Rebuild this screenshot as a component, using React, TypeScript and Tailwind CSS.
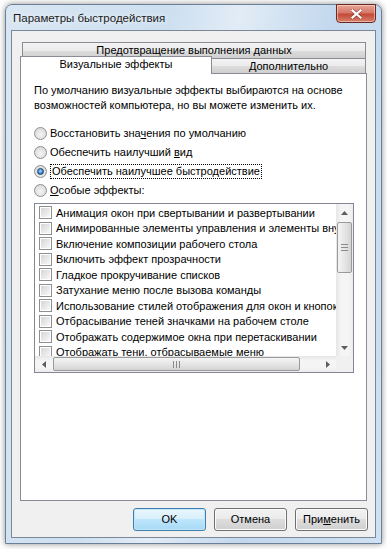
import React from "react"

const effects = [
  "Анимация окон при свертывании и развертывании",
  "Анимированные элементы управления и элементы внутри окна",
  "Включение композиции рабочего стола",
  "Включить эффект прозрачности",
  "Гладкое прокручивание списков",
  "Затухание меню после вызова команды",
  "Использование стилей отображения для окон и кнопок",
  "Отбрасывание теней значками на рабочем столе",
  "Отображать содержимое окна при перетаскивании",
  "Отображать тени, отбрасываемые меню",
]

const Radio = ({ checked }: { checked?: boolean }) => (
  <span className="flex items-center justify-center w-[13px] h-[13px] rounded-full border border-[#8e8f8f] bg-[radial-gradient(circle_at_50%_60%,#f4f4f4,#d3d3d3)] shrink-0">
    {checked && (
      <span className="w-[7px] h-[7px] rounded-full border border-[#1c3f6e] bg-[radial-gradient(circle_at_45%_40%,#a9daff,#2a75c4_70%)]" />
    )}
  </span>
)

const Checkbox = () => (
  <span className="w-[13px] h-[13px] border border-[#8e8f8f] bg-white p-px shrink-0">
    <span className="block w-full h-full bg-[linear-gradient(135deg,#d6d6d6,#f8f8f8)]" />
  </span>
)

const Arrow = ({ dir }: { dir: "up" | "down" | "left" | "right" }) => {
  const pts = {
    up: "0,4 3.5,0 7,4",
    down: "0,0 3.5,4 7,0",
    left: "4,0 0,3.5 4,7",
    right: "0,0 4,3.5 0,7",
  }[dir]
  const vertical = dir === "up" || dir === "down"
  return (
    <svg width={vertical ? 7 : 4} height={vertical ? 4 : 7} viewBox={vertical ? "0 0 7 4" : "0 0 4 7"}>
      <polygon points={pts} fill="#5e5e5e" />
    </svg>
  )
}

const Button = ({ children, primary }: { children: React.ReactNode; primary?: boolean }) => (
  <div
    className={
      "w-[73px] h-[23px] rounded-[3px] border flex items-center justify-center text-[11px] text-black " +
      (primary
        ? "border-[#3c7fb1] bg-[linear-gradient(#eaf6fd_0%,#d9f0fc_45%,#bee6fd_50%,#a7d9f5_100%)] shadow-[inset_0_0_0_1px_#c4e5f6]"
        : "border-[#707070] bg-[linear-gradient(#f2f2f2_0%,#ebebeb_45%,#dddddd_50%,#cfcfcf_100%)] shadow-[inset_0_0_0_1px_#fbfbfb]")
    }
  >
    {children}
  </div>
)

export default function App() {
  return (
    <div className="w-[387px] h-[549px] bg-white overflow-hidden font-['Liberation_Sans',Arial,sans-serif] text-black">
      <div className="ml-[5px] mt-[4px] w-[377px] h-[540px] rounded-t-[7px] border border-[#6b7f97] bg-[linear-gradient(100deg,#d9e6f3_0%,#cddff0_35%,#e2ecf6_50%,#c3d8ee_70%,#cfe1f2_100%)] shadow-[0_0_6px_rgba(0,0,0,0.45)] flex flex-col">
        <div className="h-[25px] flex justify-between shrink-0">
          <span className="pl-[7px] pt-[5px] text-[11.5px] text-[#1b1b1b] [text-shadow:0_0_6px_#fff]">
            Параметры быстродействия
          </span>
          <div className="mr-[5px] -mt-px w-[40px] h-[19px] rounded-b-[4px] border border-[#6b2a21] bg-[linear-gradient(#e8a597_0%,#d6786a_45%,#c44a36_55%,#d6806c_100%)] shadow-[inset_0_0_0_1px_rgba(255,220,210,0.55)] flex items-center justify-center">
            <svg width="11" height="10" viewBox="0 0 11 10">
              <path d="M1.5 1.5 L9.5 8.5 M9.5 1.5 L1.5 8.5" stroke="#4a1a12" strokeWidth="3.4" strokeLinecap="square" opacity="0.5" />
              <path d="M1.5 1.5 L9.5 8.5 M9.5 1.5 L1.5 8.5" stroke="#ffffff" strokeWidth="2.2" strokeLinecap="square" />
            </svg>
          </div>
        </div>

        <div className="mx-[5px] h-[508px] border border-[#7a8796] bg-[#f0f0f0] pt-[11px] pl-[8px] pr-[7px]">
          {/* tabs */}
          <div className="ml-[2px] w-[344px] h-[16px] border border-b-0 border-[#898c95] bg-[linear-gradient(#f3f3f3_0%,#ebebeb_50%,#dddddd_51%,#cfcfcf_100%)] flex items-center justify-center text-[11px]">
            Предотвращение выполнения данных
          </div>
          <div className="-mt-[2px] -mb-px flex items-end relative z-10">
            <div className="w-[192px] h-[18px] border border-b-0 border-[#898c95] bg-white flex items-center justify-center text-[11px] pb-[2px]">
              Визуальные эффекты
            </div>
            <div className="w-[154px] h-[15px] mb-px border border-l-0 border-b-0 border-[#898c95] bg-[linear-gradient(#f3f3f3_0%,#ebebeb_50%,#dddddd_51%,#cfcfcf_100%)] flex items-center justify-center text-[11px]">
              Дополнительно
            </div>
          </div>

          {/* panel */}
          <div className="w-[347px] h-[428px] border border-[#898c95] bg-white pt-[9px] px-[13px]">
            <p className="text-[11px] leading-[15px]">
              По умолчанию визуальные эффекты выбираются на основе возможностей компьютера, но вы можете изменить их.
            </p>
            <div className="mt-[11px] flex flex-col text-[11px]">
              <label className="h-[19px] flex items-center gap-[3px]">
                <Radio />
                <span>
                  Восстановить зна<span className="underline">ч</span>ения по умолчанию
                </span>
              </label>
              <label className="h-[19px] flex items-center gap-[3px]">
                <Radio />
                <span>
                  Обеспечить наилучший <span className="underline">в</span>ид
                </span>
              </label>
              <label className="h-[19px] flex items-center gap-[3px]">
                <Radio checked />
                <span className="border border-dotted border-black leading-[13px] px-px">
                  Обеспечить наилучшее быстродействие
                </span>
              </label>
              <label className="h-[19px] flex items-center gap-[3px]">
                <Radio />
                <span>
                  <span className="underline">О</span>собые эффекты:
                </span>
              </label>
            </div>

            {/* list box */}
            <div className="mt-[3px] w-[320px] h-[170px] border border-[#828790] grid grid-cols-[1fr_17px] grid-rows-[1fr_16px] overflow-hidden">
              <div className="overflow-hidden pt-[1px]">
                {effects.map((e) => (
                  <div key={e} className="h-[15.5px] flex items-center gap-[4px] pl-[4px] text-[11px] whitespace-nowrap">
                    <Checkbox />
                    <span>{e}</span>
                  </div>
                ))}
              </div>
              <div className="bg-[linear-gradient(90deg,#e6e6e6,#f5f5f5_30%,#f5f5f5_70%,#ececec)] flex flex-col items-center">
                <div className="h-[17px] w-full flex items-center justify-center">
                  <Arrow dir="up" />
                </div>
                <div className="w-[15px] h-[51px] mt-px rounded-[2px] border border-[#9a9a9a] bg-[linear-gradient(90deg,#f4f4f4,#e6e6e6_50%,#d4d4d4)] flex flex-col items-center justify-center gap-[2px]">
                  <span className="w-[7px] h-px bg-[#8a8a8a]" />
                  <span className="w-[7px] h-px bg-[#8a8a8a]" />
                  <span className="w-[7px] h-px bg-[#8a8a8a]" />
                </div>
                <div className="flex-1" />
                <div className="h-[17px] w-full flex items-center justify-center">
                  <Arrow dir="down" />
                </div>
              </div>
              <div className="bg-[linear-gradient(#e6e6e6,#f5f5f5_30%,#f5f5f5_70%,#ececec)] flex items-center">
                <div className="w-[17px] h-full flex items-center justify-center">
                  <Arrow dir="left" />
                </div>
                <div className="w-[247px] h-[14px] ml-px rounded-[2px] border border-[#9a9a9a] bg-[linear-gradient(#f4f4f4,#e6e6e6_50%,#d4d4d4)] flex items-center justify-center gap-[2px]">
                  <span className="w-px h-[7px] bg-[#8a8a8a]" />
                  <span className="w-px h-[7px] bg-[#8a8a8a]" />
                  <span className="w-px h-[7px] bg-[#8a8a8a]" />
                </div>
                <div className="flex-1" />
                <div className="w-[17px] h-full flex items-center justify-center">
                  <Arrow dir="right" />
                </div>
              </div>
              <div className="bg-[#f0f0f0]" />
            </div>
          </div>

          {/* buttons */}
          <div className="mt-[7px] flex justify-end gap-[8px]">
            <Button primary>OK</Button>
            <Button>Отмена</Button>
            <Button>
              При<span className="underline">м</span>енить
            </Button>
          </div>
        </div>
      </div>
    </div>
  )
}
